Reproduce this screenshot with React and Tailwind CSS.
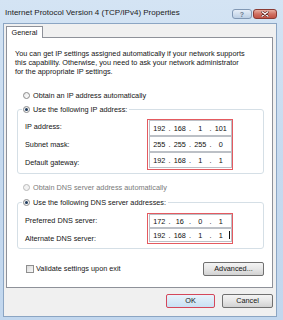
import React from "react";

const font = { fontFamily: '"Liberation Sans", Arial, sans-serif' };

function Radio({ checked, disabled }) {
  return (
    <span
      className={`relative flex h-[7px] w-[7px] shrink-0 items-center justify-center rounded-full border ${
        disabled ? "border-[#b9b9b9] bg-[#f2f2f2]" : "border-[#8a8a8a] bg-gradient-to-br from-[#e8e8e8] to-[#ffffff]"
      }`}
    >
      {checked && <span className="h-[3px] w-[3px] rounded-full bg-[#1d3a5c]" />}
    </span>
  );
}

function IpField({ parts, h }) {
  return (
    <div className={`flex ${h} items-center border border-[#bcc0c6] bg-white pl-[1px] text-[7.3px] text-[#111]`}>
      {parts.map((p, i) => (
        <React.Fragment key={i}>
          <span className="w-[17.5px] text-center leading-none">{p}</span>
          {i < 3 && <span className="w-[3px] text-center leading-none">.</span>}
        </React.Fragment>
      ))}
    </div>
  );
}

export default function App() {
  return (
    <div
      className="flex h-[320px] w-[283px] flex-col overflow-hidden bg-gradient-to-b from-[#d4e4f4] via-[#c6daef] to-[#c2d7ee] text-[#151515]"
      style={font}
    >
      {/* Title bar */}
      <div className="flex h-[23px] shrink-0 items-start pl-[5px] pr-[6px]">
        <span className="pt-[8px] text-[8px] leading-[10px] text-[#1b1b1b]">
          Internet Protocol Version 4 (TCP/IPv4) Properties
        </span>
        <div className="ml-auto flex pt-[9px]">
          <div className="flex h-[10px] w-[20px] items-center justify-center rounded-[3px] border border-[#8198b4] bg-gradient-to-b from-[#e6eef8] to-[#bccfe4] text-[7px] font-bold leading-none text-[#6a7a8e]">
            ?
          </div>
          <div className="ml-[1px] flex h-[10px] w-[24px] items-center justify-center rounded-[3px] border border-[#8a3a33] bg-gradient-to-b from-[#e8ada0] via-[#d07062] to-[#c25244]">
            <svg width="8" height="6" viewBox="0 0 8 6">
              <path d="M1 0.8 L7 5.2 M7 0.8 L1 5.2" stroke="#5a1d18" strokeWidth="2.4" strokeLinecap="round" />
              <path d="M1 0.8 L7 5.2 M7 0.8 L1 5.2" stroke="#ffffff" strokeWidth="1.3" strokeLinecap="round" />
            </svg>
          </div>
        </div>
      </div>

      {/* Dialog body */}
      <div className="ml-[3px] flex h-[294px] w-[274px] flex-col border border-[#8ba5c3] bg-[#f0f0f0] pl-[2px] pr-[3px] pt-[2px]">
        {/* Tab */}
        <div className="relative z-10 -mb-px flex h-[12px] w-[37px] items-center justify-center border-l border-r border-t border-[#8e9199] bg-white text-[7.3px] leading-none">
          General
        </div>
        {/* Panel */}
        <div className="flex h-[251px] w-[267px] flex-col border border-[#8e9199] bg-white">
          <p className="ml-[8px] mt-[10.5px] whitespace-nowrap text-[7.3px] leading-[9.2px]">
            You can get IP settings assigned automatically if your network supports
            <br />
            this capability. Otherwise, you need to ask your network administrator
            <br />
            for the appropriate IP settings.
          </p>

          <div className="ml-[16px] mt-[13.7px] flex h-[12px] items-center gap-[3px] text-[7.3px] leading-none">
            <Radio />
            <span>Obtain an IP address automatically</span>
          </div>

          <fieldset className="ml-[10px] mt-[1.5px] w-[247px] rounded-[3px] border border-[#d5dfe6] pb-[1.5px]">
            <legend className="ml-[4px] flex h-[12px] items-center gap-[3px] pl-[1px] pr-[2px] text-[7.3px] leading-none">
              <Radio checked />
              <span>Use the following IP address:</span>
            </legend>
            <div className="flex items-start">
              <div className="mt-[2.5px] flex flex-col pl-[7px] text-[7.3px] leading-none">
                <div className="flex h-[18px] items-center">IP address:</div>
                <div className="flex h-[18px] items-center">Subnet mask:</div>
                <div className="flex h-[18px] items-center">Default gateway:</div>
              </div>
              <div className="ml-auto mr-[30px] mt-[3.5px] flex w-[86px] flex-col border-[1.5px] border-[#e45a60] p-[0.5px]">
                <IpField parts={["192", "168", "1", "101"]} h="h-[16px]" />
                <IpField parts={["255", "255", "255", "0"]} h="h-[16px]" />
                <IpField parts={["192", "168", "1", "1"]} h="h-[16px]" />
              </div>
            </div>
          </fieldset>

          <div className="ml-[16px] mt-[7.5px] flex h-[12px] items-center gap-[3px] text-[7.3px] leading-none text-[#7a7a7a]">
            <Radio disabled />
            <span>Obtain DNS server address automatically</span>
          </div>

          <fieldset className="ml-[10px] mt-[3px] w-[247px] rounded-[3px] border border-[#d5dfe6] pb-0">
            <legend className="ml-[4px] flex h-[12px] items-center gap-[3px] pl-[1px] pr-[2px] text-[7.3px] leading-none">
              <Radio checked />
              <span>Use the following DNS server addresses:</span>
            </legend>
            <div className="flex items-start">
              <div className="mt-[3px] flex flex-col pl-[7px] text-[7.3px] leading-none">
                <div className="flex h-[18px] items-center">Preferred DNS server:</div>
                <div className="flex h-[18px] items-center">Alternate DNS server:</div>
              </div>
              <div className="ml-auto mr-[30px] mt-[4px] flex w-[86px] flex-col border-[1.5px] border-[#e45a60] p-[0.5px]">
                <IpField parts={["172", "16", "0", "1"]} h="h-[14px]" />
                <div className="relative">
                  <IpField parts={["192", "168", "1", "1"]} h="h-[14px]" />
                  <span className="absolute right-[2px] top-[3px] h-[8px] w-px bg-[#111]" />
                </div>
              </div>
            </div>
          </fieldset>

          <div className="ml-[19px] mr-[8px] mt-[13px] flex items-start justify-between">
            <div className="mt-[2px] flex h-[10px] items-center gap-[2px] text-[7.3px] leading-none">
              <span className="h-[8px] w-[8px] border border-[#8f8f8f] bg-gradient-to-br from-[#dcdcdc] to-[#f8f8f8]" />
              <span>Validate settings upon exit</span>
            </div>
            <div className="flex h-[14px] w-[61px] items-center justify-center rounded-[2px] border border-[#707070] bg-gradient-to-b from-[#f4f4f4] via-[#e6e6e6] to-[#d2d2d2] text-[7.3px] leading-none">
              Advanced...
            </div>
          </div>
        </div>

        {/* Buttons */}
        <div className="mt-[6px] flex justify-end gap-[7px]">
          <div className="flex h-[14px] w-[49px] items-center justify-center rounded-[2px] border-[1.5px] border-[#d4475a] bg-gradient-to-b from-[#e8f3fb] to-[#c9e1f3] text-[7.3px] leading-none">
            OK
          </div>
          <div className="flex h-[14px] w-[51px] items-center justify-center rounded-[2px] border border-[#707070] bg-gradient-to-b from-[#f4f4f4] via-[#e6e6e6] to-[#d2d2d2] text-[7.3px] leading-none">
            Cancel
          </div>
        </div>
      </div>
    </div>
  );
}
